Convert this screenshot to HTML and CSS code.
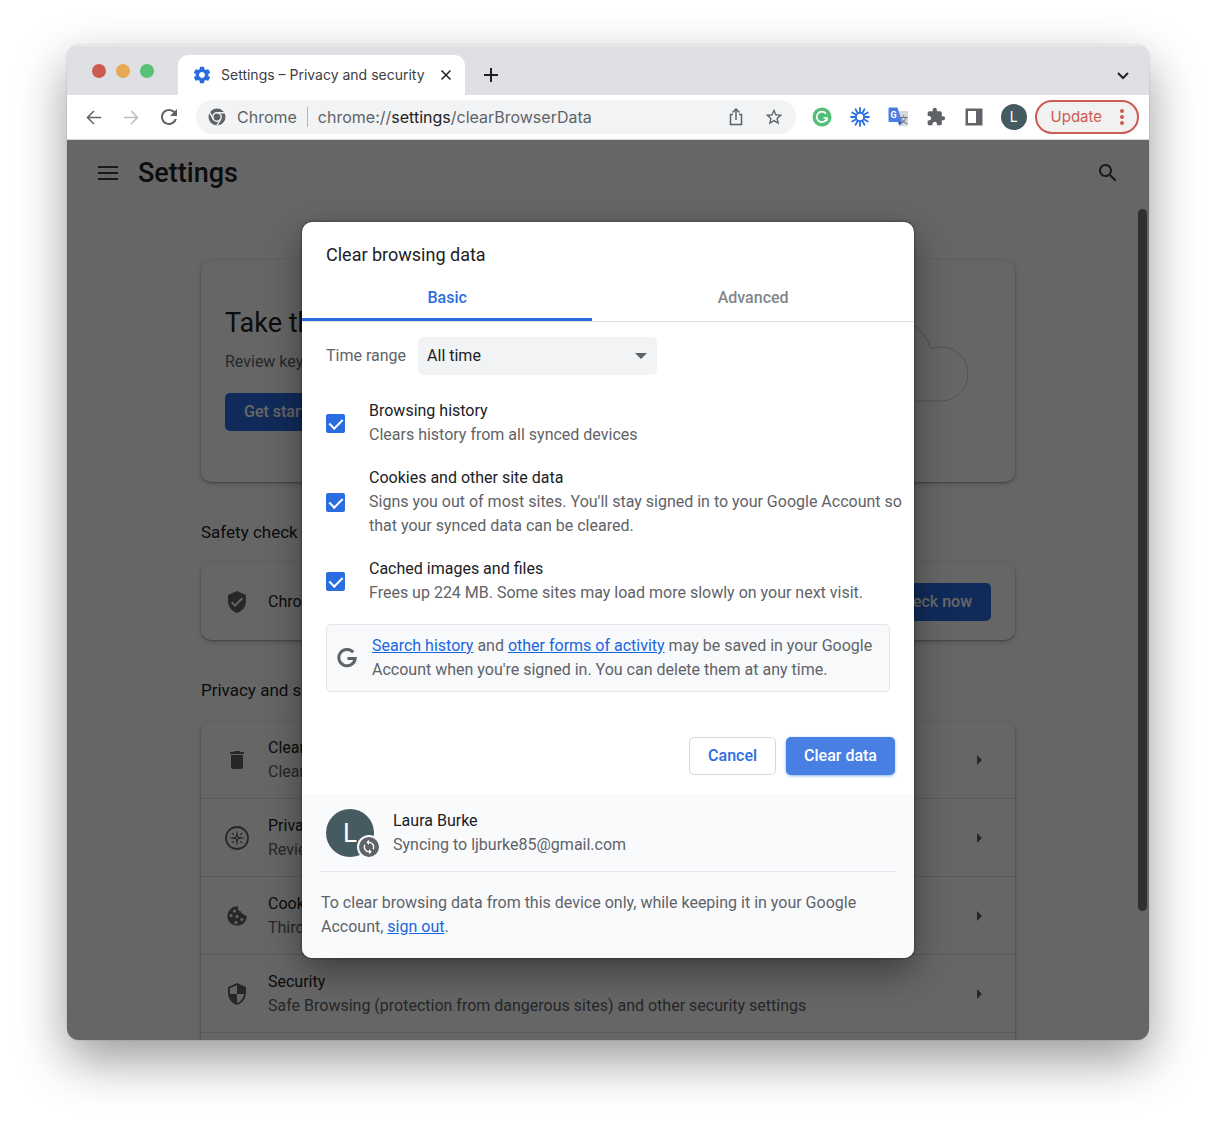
FILE: index.html
```html
<!DOCTYPE html>
<html lang="en">

<head>
    <meta charset="utf-8">
    <meta name="viewport" content="width=device-width, initial-scale=1.0">
    <title>Settings – Privacy and security</title>
    <link rel="stylesheet" href="styles.css">
</head>

<body>
    <div class="window">
        <header class="tabstrip">
            <div class="lights">
                <span class="light red"></span>
                <span class="light yellow"></span>
                <span class="light green"></span>
            </div>
            <div class="tab">
                <svg class="tab-icon" viewBox="0 0 24 24" width="20" height="20"><path d="M19.43 12.98c.04-.32.07-.64.07-.98s-.03-.66-.07-.98l2.11-1.65c.19-.15.24-.42.12-.64l-2-3.46c-.12-.22-.39-.3-.61-.22l-2.49 1c-.52-.4-1.08-.73-1.69-.98l-.38-2.65C14.46 2.18 14.25 2 14 2h-4c-.25 0-.46.18-.49.42l-.38 2.65c-.61.25-1.17.59-1.69.98l-2.49-1c-.23-.09-.49 0-.61.22l-2 3.46c-.13.22-.07.49.12.64l2.11 1.65c-.04.32-.07.65-.07.98s.03.66.07.98l-2.11 1.65c-.19.15-.24.42-.12.64l2 3.46c.12.22.39.3.61.22l2.49-1c.52.4 1.08.73 1.69.98l.38 2.65c.03.24.24.42.49.42h4c.25 0 .46-.18.49-.42l.38-2.65c.61-.25 1.17-.59 1.69-.98l2.49 1c.23.09.49 0 .61-.22l2-3.46c.12-.22.07-.49-.12-.64l-2.11-1.65zM12 15.5c-1.93 0-3.5-1.57-3.5-3.5s1.57-3.5 3.5-3.5 3.5 1.57 3.5 3.5-1.57 3.5-3.5 3.5z"/></svg>
                <span class="tab-title">Settings – Privacy and security</span>
                <button class="tab-close" aria-label="Close tab">
                    <svg viewBox="0 0 12 12" width="12" height="12"><path d="M1.500 1.500l9 9M10.500 1.500l-9 9"/></svg>
                </button>
            </div>
            <button class="new-tab" aria-label="New tab">
                <svg viewBox="0 0 16 16" width="16" height="16"><path d="M8 1v14M1 8h14"/></svg>
            </button>
            <button class="tab-search" aria-label="Search tabs">
                <svg viewBox="0 0 12 12" width="12" height="12"><path d="M1 4l5 5 5-5"/></svg>
            </button>
        </header>

        <div class="toolbar">
            <button class="tool" aria-label="Back"><svg viewBox="0 0 24 24" width="23" height="23"><path d="M20 11.200H7.600l5.400-5.400-1.100-1.100L4.600 12l7.300 7.300L13 18.200l-5.400-5.400H20z"/></svg></button>
            <button class="tool off" aria-label="Forward"><svg viewBox="0 0 24 24" width="23" height="23"><path d="M4 11.200h12.400L11 5.800l1.100-1.100 7.300 7.300-7.300 7.300L11 18.200l5.400-5.400H4z"/></svg></button>
            <button class="tool" aria-label="Reload"><svg viewBox="0 0 24 24" width="24" height="24"><path d="M17.65 6.35C16.2 4.9 14.21 4 12 4c-4.42 0-7.99 3.58-7.99 8s3.57 8 7.99 8c3.73 0 6.84-2.55 7.73-6h-2.08c-.82 2.33-3.04 4-5.65 4-3.31 0-6-2.69-6-6s2.69-6 6-6c1.66 0 3.14.69 4.22 1.78L13 11h7V4l-2.35 2.35z"/></svg></button>
            <div class="omnibox">
                <svg class="chrome-icon" viewBox="0 0 18 18" width="18" height="18">
                    <circle cx="9" cy="9" r="8.5" fill="#5f6368"/>
                    <circle cx="9" cy="9" r="4.2" fill="#5f6368" stroke="#f1f3f4" stroke-width="1.4"/>
                    <path d="M9 4.8h8M5.4 11.1l-4-6.9M12.6 11.1l-4 6.9" stroke="#f1f3f4" stroke-width="1.4" fill="none"/>
                </svg>
                <span class="site">Chrome</span>
                <div class="url" role="textbox" contenteditable="true" spellcheck="false" aria-label="Address">chrome://<b>settings</b>/clearBrowserData</div>
                <button class="tool" aria-label="Share"><svg viewBox="0 0 20 20" width="20" height="20"><path d="M7 7.500H4.500v10h11v-10H13M10 13V2.500M6.500 5.500L10 2l3.500 3.500" fill="none" stroke="#5f6368" stroke-width="1.500"/></svg></button>
                <button class="tool" aria-label="Bookmark"><svg viewBox="0 0 24 24" width="20" height="20"><path d="M22 9.24l-7.19-.62L12 2 9.190 8.630 2 9.240l5.460 4.730L5.820 21 12 17.270 18.180 21l-1.630-7.030L22 9.240zM12 15.400l-3.760 2.270 1-4.280-3.320-2.880 4.380-.38L12 6.100l1.710 4.040 4.380.38-3.320 2.880 1 4.280L12 15.400z"/></svg></button>
            </div>
            <button class="tool" aria-label="Grammarly"><svg viewBox="0 0 20 20" width="20" height="20"><circle cx="10" cy="10" r="9.500" fill="#53bf76"/><path d="M14 6.700A5.200 5.200 0 1 0 15 11h-3.500M15 10.300v3.500" fill="none" stroke="#fff" stroke-width="1.700"/></svg></button>
            <button class="tool" aria-label="Loom"><svg viewBox="0 0 20 20" width="20" height="20"><g stroke="#2a6de0" stroke-width="1.800" stroke-linecap="round"><path d="M10 1v18M1 10h18M5.500 2.200l9 15.600M2.200 5.500l15.600 9M14.500 2.200l-9 15.600M17.800 5.500l-15.600 9"/></g><circle cx="10" cy="10" r="5" fill="#2a6de0"/><circle cx="10" cy="10" r="3.200" fill="#fff"/></svg></button>
            <button class="tool" aria-label="Google Translate"><svg viewBox="0 0 20 20" width="20" height="20"><path d="M8 4h11a1 1 0 0 1 1 1v13a1 1 0 0 1-1 1h-7z" fill="#d5d7da"/><text x="11" y="16" font-size="9" class="glyph-cjk">文</text><path d="M1.500 0.500h8l4.500 14.500h-12.500a1 1 0 0 1-1-1v-12.500a1 1 0 0 1 1-1z" fill="#4a7ee0"/><path d="M10 15h4l-2.500 4z" fill="#2a5fd0"/><text x="2.500" y="11" font-size="9" class="glyph-g">G</text></svg></button>
            <button class="tool" aria-label="Extensions"><svg viewBox="0 0 24 24" width="20" height="20"><path d="M20.500 11H19V7c0-1.100-.9-2-2-2h-4V3.500C13 2.120 11.880 1 10.500 1S8 2.120 8 3.500V5H4c-1.100 0-1.990.9-1.990 2v3.800H3.500c1.490 0 2.700 1.210 2.700 2.700s-1.210 2.700-2.700 2.700H2V20c0 1.100.9 2 2 2h3.800v-1.500c0-1.490 1.210-2.700 2.700-2.700 1.490 0 2.700 1.210 2.700 2.700V22H17c1.100 0 2-.9 2-2v-4h1.500c1.380 0 2.500-1.120 2.500-2.500S21.880 11 20.500 11z"/></svg></button>
            <button class="tool" aria-label="Side panel"><svg viewBox="0 0 18 18" width="18" height="18"><path d="M.5 .5h17v17H.5zM3 3v12h8V3z" fill-rule="evenodd"/></svg></button>
            <button class="profile" aria-label="Profile"><span>L</span></button>
            <button class="update">Update
                <svg viewBox="0 0 4 18" width="4" height="18"><circle cx="2" cy="3" r="2"/><circle cx="2" cy="9" r="2"/><circle cx="2" cy="15" r="2"/></svg>
            </button>
        </div>

        <div class="page">
            <div class="page-head">
                <button class="menu" aria-label="Main menu"><svg viewBox="0 0 20 16" width="20" height="16"><path d="M0 1h20v2H0zM0 7h20v2H0zM0 13h20v2H0z"/></svg></button>
                <h1>Settings</h1>
                <button class="menu" aria-label="Search settings"><svg viewBox="0 0 24 24" width="24" height="24"><path d="M15.500 14h-.79l-.28-.27C15.410 12.590 16 11.110 16 9.500 16 5.910 13.090 3 9.500 3S3 5.910 3 9.500 5.910 16 9.500 16c1.610 0 3.090-.59 4.230-1.570l.27.28v.79l5 4.990L20.490 19l-4.990-5zm-6 0C7.010 14 5 11.990 5 9.500S7.010 5 9.500 5 14 7.010 14 9.500 11.990 14 9.500 14z"/></svg></button>
            </div>

            <main class="content">
                <section class="card promo">
                    <div>
                        <h2 class="promo-title">Take the privacy guide</h2>
                        <p>Review key privacy and security controls</p>
                        <button class="blue">Get started</button>
                    </div>
                    <svg class="cloud" viewBox="0 0 160 90" width="160" height="90"><path d="M40 88h93a27 27 0 0 0 0-54q-6 0-10 2A48 48 0 0 0 32 34a27 27 0 0 0 8 54z"/></svg>
                </section>

                <h2>Safety check</h2>
                <section class="card row">
                    <svg class="row-icon" viewBox="0 0 24 24" width="24" height="24"><path d="M12 1L3 5v6c0 5.550 3.840 10.740 9 12 5.160-1.260 9-6.450 9-12V5l-9-4zm-2 16l-4-4 1.410-1.410L10 14.170l6.590-6.590L18 9l-8 8z"/></svg>
                    <div class="row-text"><p class="dark">Chrome can help keep you safe</p></div>
                    <button class="blue">Check now</button>
                </section>

                <h2>Privacy and security</h2>
                <section class="card list">
                    <div class="row">
                        <svg class="row-icon" viewBox="0 0 24 24" width="24" height="24"><path d="M6 19c0 1.100.9 2 2 2h8c1.100 0 2-.9 2-2V7H6v12zM19 4h-3.500l-1-1h-5l-1 1H5v2h14V4z"/></svg>
                        <div class="row-text"><p class="dark">Clear browsing data</p><p>Clear history, cookies, cache, and more</p></div>
                        <span class="arrow"></span>
                    </div>
                    <div class="row">
                        <svg class="row-icon" viewBox="0 0 24 24" width="24" height="24"><circle cx="12" cy="12" r="11" fill="none" stroke="#5f6368" stroke-width="1.800"/><path d="M12 3.500l1.200 7.300 7.300 1.200-7.300 1.200L12 20.500l-1.200-7.300L3.500 12l7.300-1.200z"/><path d="M6.800 6.800l2 2M17.200 6.800l-2 2M6.800 17.200l2-2M17.200 17.200l-2-2" stroke="#5f6368" stroke-width="1.200"/><circle cx="12" cy="12" r="1" fill="#fff"/></svg>
                        <div class="row-text"><p class="dark">Privacy Guide</p><p>Review key privacy and security controls</p></div>
                        <span class="arrow"></span>
                    </div>
                    <div class="row">
                        <svg class="row-icon" viewBox="0 0 24 24" width="24" height="24"><path d="M12 2.200a9.800 9.800 0 1 0 9.900 9.500c-1.500.3-2.600-.3-3-1.700-1.800.3-3-.8-2.700-2.500-2.300.2-4-1.800-2.900-5.200-.3-.1-.9-.1-1.300-.1z"/><g fill="#fff"><circle cx="9.500" cy="7" r="1.500"/><circle cx="6" cy="11.500" r="1.500"/><circle cx="12" cy="12.500" r="1.500"/><circle cx="11" cy="18.500" r="1.500"/><circle cx="16.800" cy="15.500" r="1.500"/></g></svg>
                        <div class="row-text"><p class="dark">Cookies and other site data</p><p>Third-party cookies are blocked in Incognito mode</p></div>
                        <span class="arrow"></span>
                    </div>
                    <div class="row">
                        <svg class="row-icon" viewBox="0 0 24 24" width="24" height="24"><path d="M12 1L3 5v6c0 5.550 3.840 10.740 9 12 5.160-1.260 9-6.450 9-12V5l-9-4zm0 10.990h7c-.53 4.120-3.280 7.790-7 8.940V12H5V6.300l7-3.110v8.800z"/></svg>
                        <div class="row-text"><p class="dark">Security</p><p>Safe Browsing (protection from dangerous sites) and other security settings</p></div>
                        <span class="arrow"></span>
                    </div>
                    <div class="row"></div>
                </section>
            </main>
            <div class="scrollbar"></div>

            <div class="scrim">
                <form class="dialog" role="dialog" aria-labelledby="dialog-title">
                    <h2 id="dialog-title">Clear browsing data</h2>
                    <div class="tabs" role="tablist">
                        <button type="button" class="selected" role="tab" aria-selected="true">Basic</button>
                        <button type="button" role="tab" aria-selected="false">Advanced</button>
                    </div>

                    <div class="options">
                        <div class="range">
                            <label for="time-range">Time range</label>
                            <div class="select">
                                <select id="time-range">
                                    <option>Last hour</option>
                                    <option>Last 24 hours</option>
                                    <option>Last 7 days</option>
                                    <option>Last 4 weeks</option>
                                    <option selected>All time</option>
                                </select>
                            </div>
                        </div>
                        <label class="option">
                            <input type="checkbox" checked>
                            <span><strong>Browsing history</strong>Clears history from all synced devices</span>
                        </label>
                        <label class="option">
                            <input type="checkbox" checked>
                            <span><strong>Cookies and other site data</strong>Signs you out of most sites. You'll stay signed in to your Google Account so that your synced data can be cleared.</span>
                        </label>
                        <label class="option">
                            <input type="checkbox" checked>
                            <span><strong>Cached images and files</strong>Frees up 224 MB. Some sites may load more slowly on your next visit.</span>
                        </label>
                        <div class="note">
                            <svg viewBox="0 0 20 20" width="20" height="20"><path d="M16.200 4.200A8.200 8.200 0 1 0 18.200 10.500H10.500" fill="none" stroke="#5f6368" stroke-width="3"/></svg>
                            <p><a href="#">Search history</a> and <a href="#">other forms of activity</a> may be saved in your Google Account when you're signed in. You can delete them at any time.</p>
                        </div>
                    </div>

                    <div class="buttons">
                        <button type="button" class="cancel">Cancel</button>
                        <button type="submit" class="clear">Clear data</button>
                    </div>

                    <footer class="account">
                        <div class="user">
                            <div class="avatar">L
                                <span class="badge"><svg viewBox="0 0 24 24" width="16" height="16"><path d="M12 4V1L8 5l4 4V6c3.310 0 6 2.690 6 6 0 1.010-.25 1.970-.7 2.800l1.460 1.460C19.540 15.030 20 13.570 20 12c0-4.420-3.580-8-8-8zm0 14c-3.310 0-6-2.690-6-6 0-1.010.25-1.970.7-2.800L5.240 7.740C4.460 8.970 4 10.430 4 12c0 4.420 3.580 8 8 8v3l4-4-4-4v3z"/></svg></span>
                            </div>
                            <p><strong>Laura Burke</strong>Syncing to ljburke85@gmail.com</p>
                        </div>
                        <p class="signout">To clear browsing data from this device only, while keeping it in your Google Account, <a href="#">sign out</a>.</p>
                    </footer>
                </form>
            </div>
        </div>
    </div>
</body>

</html>
```
FILE: styles.css
```css
* {
    box-sizing: border-box;
}

body {
    margin: 0;
    height: 100vh;
    padding: 45px 67px 89px;
    background-color: white;
    color: #5f6368;
    font-family: Roboto, sans-serif;
    font-size: 16px;
    line-height: 24px;
    overflow: hidden;
}

h1, h2, p {
    margin: 0;
}

button {
    font: inherit;
    border: none;
    background: none;
    padding: 0;
    cursor: pointer;
}

svg {
    display: block;
    fill: #5f6368;
}

a {
    color: #1a66e0;
}

strong {
    display: block;
    color: #202124;
    font-weight: 400;
}

.window {
    display: flex;
    flex-direction: column;
    height: 100%;
    border-radius: 12px;
    overflow: hidden;
    box-shadow: 0 0 1px rgba(0, 0, 0, 0.5), 0 20px 50px rgba(0, 0, 0, 0.4);
}

/* tab strip */

.tabstrip {
    display: flex;
    align-items: flex-end;
    height: 50px;
    background-color: #dee0e4;
    border-top: 1px solid #eceef0;
}

.lights {
    display: flex;
    gap: 10px;
    align-self: center;
    padding: 0 24px 0 25px;
}

.light {
    width: 14px;
    height: 14px;
    border-radius: 50%;
}

.red {
    background-color: #cc5b51;
}

.yellow {
    background-color: #e8a957;
}

.green {
    background-color: #57c176;
}

.tab {
    display: flex;
    align-items: center;
    height: 40px;
    padding: 0 13px 0 14px;
    background-color: white;
    border-radius: 10px 10px 0 0;
    color: #3c4043;
    font-family: Inter, sans-serif;
    font-size: 14px;
}

.tab-icon {
    fill: #2a6de0;
    margin-right: 9px;
}

.tab-close {
    margin-left: 15px;
}

.tabstrip button svg {
    fill: none;
    stroke: #202124;
    stroke-width: 2;
}

.tabstrip .tab-close svg {
    stroke-width: 1.5;
}

.new-tab {
    padding: 12px 18px;
}

.tab-search {
    margin-left: auto;
    padding: 14px 20px;
}

/* toolbar */

.toolbar {
    display: flex;
    align-items: center;
    height: 45px;
    padding: 0 10px 0 7px;
    background-color: white;
    border-bottom: 1px solid #d5d7da;
}

.tool {
    display: flex;
    flex: none;
    align-items: center;
    justify-content: center;
    width: 38px;
    height: 34px;
}

.off svg {
    fill: #babcbe;
}

.omnibox {
    display: flex;
    flex: 1;
    align-items: center;
    min-width: 0;
    height: 34px;
    margin: 0 7px 0 8px;
    padding: 0 3px 0 12px;
    border-radius: 17px;
    background-color: #f1f3f4;
    color: #5f6368;
    font-family: Inter, sans-serif;
}

.site {
    margin-left: 11px;
    padding-right: 10px;
    border-right: 1px solid #b4b6b9;
    line-height: 20px;
}

.url {
    flex: 1;
    min-width: 0;
    padding-left: 10px;
    outline: none;
    white-space: nowrap;
    overflow: hidden;
}

.url b {
    color: #202124;
    font-weight: 400;
}

.glyph-cjk {
    fill: #5f6368;
    font-family: "Noto Sans CJK SC", sans-serif;
}

.glyph-g {
    fill: white;
    font-family: Roboto, sans-serif;
    font-weight: 700;
}

.profile {
    width: 42px;
}

.profile span {
    display: block;
    width: 26px;
    margin: auto;
    border-radius: 50%;
    background-color: #455a61;
    color: white;
    font-size: 14px;
    line-height: 26px;
}

.update {
    display: flex;
    align-items: center;
    gap: 18px;
    height: 34px;
    padding: 0 13px 0 14px;
    border: 2px solid #cc5b51;
    border-radius: 17px;
    background-color: #f1f1f1;
    color: #cc5b51;
    font-family: Inter, sans-serif;
    font-size: 15px;
}

.update svg {
    fill: #cc5b51;
}

/* settings page */

.page {
    position: relative;
    flex: 1;
    min-height: 0;
    overflow: hidden;
}

.page-head {
    display: flex;
    align-items: center;
    gap: 20px;
    height: 66px;
    padding: 0 29px 0 31px;
}

.page-head svg {
    fill: #3c4043;
}

h1 {
    flex: 1;
    color: #202124;
    font-size: 27px;
    font-weight: 500;
}

.content {
    width: 90%;
    max-width: 814px;
    margin: 0 auto;
    padding-top: 54px;
}

.content h2 {
    color: #202124;
    font-size: 17px;
    font-weight: 400;
    padding: 38px 0 19px;
}

.card {
    border-radius: 10px;
    background-color: white;
    box-shadow: 0 1px 2px rgba(0, 0, 0, 0.3), 0 2px 6px rgba(0, 0, 0, 0.15);
}

.promo {
    display: flex;
    align-items: flex-start;
    justify-content: space-between;
    height: 222px;
    padding: 47px 47px 0 24px;
}

.content .promo-title {
    padding: 0 0 11px;
    font-size: 27px;
    line-height: 32px;
}

.cloud {
    margin-top: 6px;
    fill: none;
    stroke: #b8d0dc;
}

.blue {
    height: 38px;
    padding: 0 19px;
    border-radius: 5px;
    background-color: #2a6de0;
    color: white;
    font-weight: 500;
}

.promo .blue {
    margin-top: 19px;
}

.row {
    display: flex;
    align-items: center;
    min-height: 77px;
    padding: 0 24px;
}

.list .row + .row {
    min-height: 78px;
    border-top: 1px solid #e0e2e5;
}

.row-text {
    flex: 1;
    padding-left: 19px;
}

.dark {
    color: #202124;
}

.arrow {
    margin-right: 9px;
    border: 5px solid transparent;
    border-left-color: #5f6368;
    border-right: none;
}

.scrollbar {
    position: absolute;
    top: 69px;
    right: 2px;
    width: 9px;
    height: 78%;
    border-radius: 5px;
    background-color: #757575;
}

.scrim {
    position: absolute;
    inset: 0;
    display: flex;
    align-items: center;
    justify-content: center;
    background-color: rgba(0, 0, 0, 0.6);
}

/* dialog */

.dialog {
    width: 612px;
    max-width: 90%;
    border-radius: 10px;
    background-color: white;
    overflow: hidden;
    box-shadow: 0 0 3px rgba(0, 0, 0, 0.5), 0 14px 36px rgba(0, 0, 0, 0.4);
}

.dialog h2 {
    padding: 21px 24px 6px;
    color: #202124;
    font-size: 18px;
    font-weight: 400;
}

.tabs {
    display: flex;
    border-bottom: 1px solid #dcdee1;
}

.tabs button {
    flex: 1 1 auto;
    height: 48px;
    padding-top: 5px;
    border-bottom: 3px solid transparent;
    color: #80868b;
    font-weight: 500;
}

.tabs .selected {
    border-bottom-color: #2a6de0;
    color: #2a6de0;
}

.options {
    display: flex;
    flex-direction: column;
    gap: 19px;
    padding: 15px 11px 0 24px;
}

.range {
    display: flex;
    align-items: center;
    gap: 12px;
    margin-bottom: 5px;
}

.select {
    position: relative;
}

.select::after {
    content: "";
    position: absolute;
    top: 16px;
    right: 10px;
    border: 6px solid transparent;
    border-top-color: #5f6368;
    border-bottom: none;
    pointer-events: none;
}

select {
    appearance: none;
    display: block;
    width: 239px;
    height: 38px;
    padding: 0 9px;
    border: none;
    border-radius: 5px;
    background-color: #f1f3f4;
    color: #202124;
    font: inherit;
}

.option {
    display: flex;
    align-items: center;
    gap: 24px;
}

input[type="checkbox"] {
    appearance: none;
    flex: none;
    display: flex;
    justify-content: center;
    width: 19px;
    height: 19px;
    margin: 0;
    border-radius: 2px;
    background-color: #2a6de0;
}

input[type="checkbox"]:checked::after {
    content: "";
    width: 6px;
    height: 11px;
    margin-top: 2px;
    border: solid white;
    border-width: 0 2px 2px 0;
    transform: rotate(45deg);
}

.note {
    display: flex;
    align-items: center;
    gap: 15px;
    margin-right: 13px;
    padding: 9px 11px 9px 10px;
    border: 1px solid #e3e5e8;
    border-radius: 5px;
    background-color: #f8f9fb;
}

.note svg {
    flex: none;
}

.buttons {
    display: flex;
    justify-content: flex-end;
    gap: 10px;
    padding: 45px 19px 19px;
}

.buttons button {
    height: 38px;
    padding: 0 18px;
    border-radius: 5px;
    font-weight: 500;
}

.buttons .cancel {
    border: 1px solid #d5d8dd;
    color: #2a6de0;
}

.buttons .clear {
    background-color: #487fe3;
    color: white;
    box-shadow: 0 1px 3px rgba(26, 102, 224, 0.5);
}

.account {
    padding: 15px 19px 19px;
    background-color: #f9fafc;
}

.user {
    display: flex;
    align-items: center;
    gap: 19px;
    padding: 0 5px 14px;
    border-bottom: 1px solid #e3e5e8;
}

.avatar {
    position: relative;
    width: 48px;
    height: 48px;
    border-radius: 50%;
    background-color: #455a61;
    color: white;
    font-size: 26px;
    line-height: 48px;
    text-align: center;
}

.badge {
    position: absolute;
    right: -7px;
    bottom: -2px;
    padding: 2px;
    border: 2px solid #f9fafc;
    border-radius: 50%;
    background-color: #5f6368;
}

.badge svg {
    fill: white;
}

.signout {
    padding-top: 19px;
}
```
